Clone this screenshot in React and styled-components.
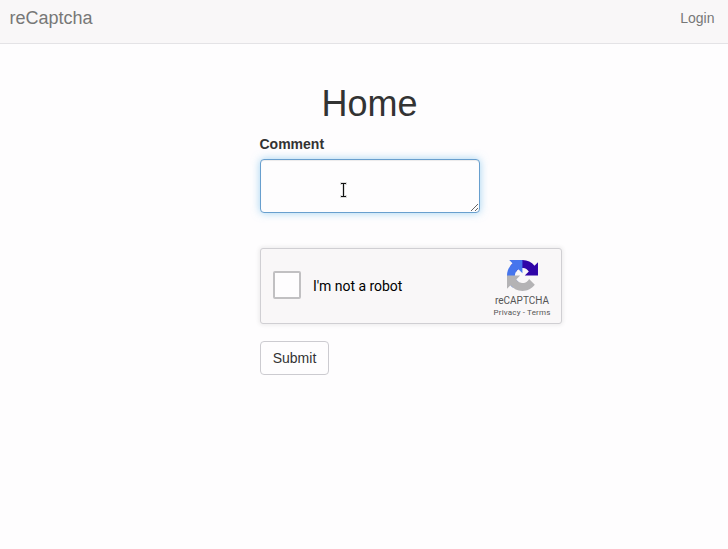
import React from 'react';
import styled, { createGlobalStyle } from 'styled-components';

const GlobalStyle = createGlobalStyle`
  * { box-sizing: border-box; }
  body {
    margin: 0;
    background: #fefdfe;
    color: #333;
    font: 14px/20px "Liberation Sans", Arial, sans-serif;
    overflow: hidden;
  }
`;

const Navbar = styled.nav`
  display: flex;
  justify-content: space-between;
  height: 44px;
  padding: 8px 13.5px 0 9.5px;
  background: #f9f7f8;
  border-bottom: 1px solid #e4e3e6;
  color: #777;
`;

const Brand = styled.span`
  font-size: 18px;
`;

const NavLink = styled.span`
  font-size: 14px;
`;

const Form = styled.form`
  width: 220px;
  margin: 40px 0 0 259.5px;
`;

const Title = styled.h1`
  margin: 0 0 10px;
  font-size: 36px;
  font-weight: 400;
  line-height: 40px;
  text-align: center;
`;

const Label = styled.label`
  display: block;
  margin-bottom: 5px;
  font-weight: 700;
`;

const CommentField = styled.div`
  position: relative;
  height: 54px;
`;

const CommentInput = styled.textarea`
  display: block;
  width: 220px;
  height: 54px;
  padding: 6px 12px;
  resize: none;
  outline: 0;
  border: 1px solid #689fce;
  border-radius: 4px;
  background: #fefdfe;
  box-shadow: inset 0 1px 1px rgba(0, 0, 0, 0.075), 0 0 8px rgba(102, 185, 233, 0.6);
`;

const ResizeGrip = styled.svg`
  position: absolute;
  right: 1px;
  bottom: 1px;
`;

const TextCursor = styled.svg`
  position: absolute;
  left: 79px;
  top: 22px;
`;

const Captcha = styled.div`
  display: flex;
  align-items: center;
  width: 302px;
  height: 76px;
  margin: 35px 0 17px;
  padding-left: 12px;
  border: 1px solid #d0cfd3;
  border-radius: 3px;
  background: #f9f7f8;
  box-shadow: 0 0 4px 1px rgba(0, 0, 0, 0.08);
  font-family: Roboto, sans-serif;
`;

const Checkbox = styled.span`
  width: 28px;
  height: 28px;
  margin-top: -2px;
  border: 2px solid #c1c0c2;
  border-radius: 2px;
  background: #fefdfe;
`;

const CaptchaText = styled.span`
  margin-left: 12.5px;
  color: #000;
  font-size: 14px;
  letter-spacing: -0.03px;
`;

const CaptchaBrand = styled.div`
  display: flex;
  flex-direction: column;
  align-items: center;
  width: 58px;
  margin: 5px 9.5px 0 auto;
  color: #555;
  white-space: nowrap;
`;

const CaptchaName = styled.span`
  margin-top: 4px;
  font-size: 10px;
  line-height: 12px;
`;

const CaptchaLinks = styled.span`
  margin-top: 1px;
  font-size: 8px;
  line-height: 10px;
  letter-spacing: 0.17px;
`;

const Submit = styled.button`
  display: block;
  width: 69px;
  height: 34px;
  padding: 0 0 0 1px;
  border: 1px solid #cccbd0;
  border-radius: 4px;
  background: #fefdfe;
  color: #333;
  font: inherit;
`;

function CaptchaLogo() {
  return (
    <svg width="31" height="31" viewBox="0 0 64 64">
      <path fill="#3005a8" d="M64 31.955l-.033-1.37V4.687l-7.16 7.16C50.948 4.674 42.033.093 32.05.093c-10.4 0-19.622 4.96-25.458 12.64l11.736 11.86a15.55 15.55 0 0 1 4.754-5.334c2.05-1.6 4.952-2.906 8.968-2.906.485 0 .86.057 1.135.163 4.976.393 9.288 3.14 11.828 7.124l-8.307 8.307L64 31.953" />
      <path fill="#4675ed" d="M31.862.094l-1.37.033H4.594l7.16 7.16C4.58 13.147 0 22.06 0 32.046c0 10.4 4.96 19.622 12.64 25.458L24.5 45.768a15.55 15.55 0 0 1-5.334-4.754c-1.6-2.05-2.906-4.952-2.906-8.968 0-.485.057-.86.163-1.135.393-4.976 3.14-9.288 7.124-11.828l8.307 8.307L31.86.095" />
      <path fill="#b4b3b5" d="M.001 32.045l.033 1.37v25.898l7.16-7.16c5.86 7.173 14.774 11.754 24.76 11.754 10.4 0 19.622-4.96 25.458-12.64l-11.736-11.86a15.55 15.55 0 0 1-4.754 5.334c-2.05 1.6-4.952 2.906-8.968 2.906-.485 0-.86-.057-1.135-.163-4.976-.393-9.288-3.14-11.828-7.124l8.307-8.307c-10.522.04-22.4.066-27.295-.005" />
    </svg>
  );
}

export default function App() {
  return (
    <>
      <GlobalStyle />
      <Navbar>
        <Brand>reCaptcha</Brand>
        <NavLink>Login</NavLink>
      </Navbar>
      <Form>
        <Title>Home</Title>
        <Label htmlFor="comment">Comment</Label>
        <CommentField>
          <CommentInput id="comment" />
          <ResizeGrip width="9" height="9" viewBox="0 0 9 9" fill="none" stroke="#555" strokeWidth="0.9">
            <path d="M1 8 8 1M5 8l3-3" />
          </ResizeGrip>
          <TextCursor width="10" height="18" viewBox="0 0 10 18" shapeRendering="crispEdges">
            <path d="M2 2h5v1H5v12h2v1H2v-1h2V3H2z" fill="#111" stroke="#ddd" strokeWidth="2" paintOrder="stroke" />
          </TextCursor>
        </CommentField>
        <Captcha>
          <Checkbox />
          <CaptchaText>I'm not a robot</CaptchaText>
          <CaptchaBrand>
            <CaptchaLogo />
            <CaptchaName>reCAPTCHA</CaptchaName>
            <CaptchaLinks>Privacy - Terms</CaptchaLinks>
          </CaptchaBrand>
        </Captcha>
        <Submit type="button">Submit</Submit>
      </Form>
    </>
  );
}
